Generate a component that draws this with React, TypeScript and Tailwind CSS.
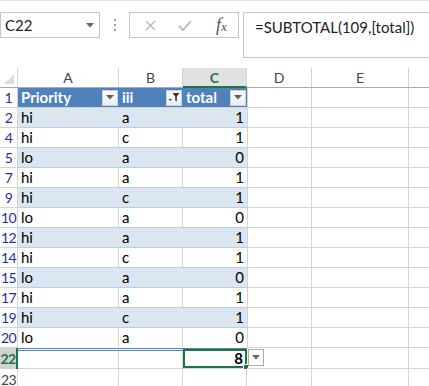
import React from 'react';

type Row = { n: number; a: string; b: string; c: string };

const rows: Row[] = [
  { n: 2, a: 'hi', b: 'a', c: '1' },
  { n: 4, a: 'hi', b: 'c', c: '1' },
  { n: 5, a: 'lo', b: 'a', c: '0' },
  { n: 7, a: 'hi', b: 'a', c: '1' },
  { n: 9, a: 'hi', b: 'c', c: '1' },
  { n: 10, a: 'lo', b: 'a', c: '0' },
  { n: 12, a: 'hi', b: 'a', c: '1' },
  { n: 14, a: 'hi', b: 'c', c: '1' },
  { n: 15, a: 'lo', b: 'a', c: '0' },
  { n: 17, a: 'hi', b: 'a', c: '1' },
  { n: 19, a: 'hi', b: 'c', c: '1' },
  { n: 20, a: 'lo', b: 'a', c: '0' },
];

const Caret = ({ color = '#5f5f5f' }: { color?: string }) => (
  <svg width="8" height="5" viewBox="0 0 8 5">
    <path d="M0 0 H8 L4 4.5 Z" fill={color} />
  </svg>
);

const FilterBtn = ({ funnel }: { funnel?: boolean }) => (
  <div className="flex h-[16px] w-[16px] items-center justify-center border border-[#c9d3e0] bg-gradient-to-b from-white to-[#e9edf2]">
    {funnel ? (
      <svg width="12" height="11" viewBox="0 0 12 11">
        <path d="M0.5 7 H4 L2.25 9 Z" fill="#444" />
        <path d="M4.5 1 H11.5 L8.8 4.5 V9.5 L7.2 8.5 V4.5 Z" fill="#333" />
      </svg>
    ) : (
      <Caret />
    )}
  </div>
);

export default function App() {
  const font = { fontFamily: 'Lato, "Open Sans", sans-serif' };
  return (
    <div className="h-[386px] w-[429px] overflow-hidden bg-white text-[15px] text-black" style={font}>
      {/* formula bar area */}
      <div className="relative h-[68px] border-t border-[#e1e1e1]">
        <div className="flex items-start pt-[11px]">
          <div className="flex h-[26px] w-[100px] items-center justify-between border border-[#c6c6c6] pl-[4px] pr-[5px] text-[15px] text-[#222]">
            <span>C22</span>
            <Caret color="#666" />
          </div>
          <div className="ml-[14px] mt-[7px] flex flex-col gap-[3px]">
            <div className="h-[2px] w-[2px] bg-[#a0a0a0]" />
            <div className="h-[2px] w-[2px] bg-[#a0a0a0]" />
            <div className="h-[2px] w-[2px] bg-[#a0a0a0]" />
          </div>
          <div className="ml-[13px] flex h-[26px] w-[110px] items-center border border-[#c6c6c6]">
            <svg className="ml-[15px]" width="11" height="11" viewBox="0 0 11 11">
              <path d="M1 1 L10 10 M10 1 L1 10" stroke="#b8b8b8" strokeWidth="1.4" />
            </svg>
            <svg className="ml-[22px]" width="14" height="11" viewBox="0 0 14 11">
              <path d="M1 6 L5 10 L13 1" stroke="#b8b8b8" strokeWidth="1.8" fill="none" />
            </svg>
            <span className="ml-[24px] font-['Liberation_Serif'] text-[18px] italic leading-none text-[#555]">
              f<span className="text-[13px]">x</span>
            </span>
          </div>
          <div className="ml-[4px] flex h-[46px] flex-1 items-start border border-r-0 border-[#c6c6c6] pl-[11px] pt-[3px] text-[15px] text-[#222]">
            =SUBTOTAL(109,[total])
          </div>
        </div>
      </div>

      {/* column headers */}
      <div className="flex h-[20px] border-b border-[#ababab] text-[14px] text-[#444]">
        <div className="relative w-[18px] border-r border-[#d4d4d4]">
          <svg className="absolute bottom-[3px] right-[3px]" width="10" height="10" viewBox="0 0 10 10">
            <path d="M10 0 V10 H0 Z" fill="#dcdcdc" />
          </svg>
        </div>
        <div className="flex w-[101px] items-center justify-center border-r border-[#d4d4d4]">A</div>
        <div className="flex w-[64px] items-center justify-center border-r border-[#d4d4d4]">B</div>
        <div className="-mb-px flex w-[64px] items-center justify-center border-b-2 border-r border-[#217346] border-r-[#d4d4d4] bg-[#e1e1e1] font-bold text-[#217346]">
          C
        </div>
        <div className="flex w-[65px] items-center justify-center border-r border-[#d4d4d4]">D</div>
        <div className="flex w-[97px] items-center justify-center border-r border-[#d4d4d4]">E</div>
        <div className="flex-1" />
      </div>

      {/* header row 1 */}
      <div className="flex h-[20px] border-b border-[#d4d4d4]">
        <div className="flex w-[18px] items-center justify-center border-r border-[#d4d4d4] text-[14px] text-[#1f2fa0]">1</div>
        <div className="flex w-[229px] bg-[#4f81bd] font-bold text-white">
          <div className="flex w-[101px] items-center justify-between pl-[3px] pr-[1px]">
            <span>Priority</span>
            <FilterBtn />
          </div>
          <div className="flex w-[64px] items-center justify-between pl-[3px] pr-[1px]">
            <span>iii</span>
            <FilterBtn funnel />
          </div>
          <div className="flex w-[64px] items-center justify-between pl-[3px] pr-[1px]">
            <span>total</span>
            <FilterBtn />
          </div>
        </div>
        <div className="w-[65px] border-l border-r border-[#d4d4d4]" />
        <div className="w-[97px] border-r border-[#d4d4d4]" />
      </div>

      {rows.map((r, i) => {
        const band = i % 2 === 0;
        return (
          <div key={r.n} className="flex h-[20px]">
            <div className="flex w-[18px] items-center justify-center border-b border-r border-[#d4d4d4] text-[14px] tracking-[-0.5px] text-[#1f2fa0]">
              {r.n}
            </div>
            <div
              className={
                'flex w-[229px] border-b ' +
                (i === rows.length - 1 ? 'border-transparent' : 'border-[#b8cce4]') +
                ' ' +
                (band ? 'bg-[#dce6f1]' : 'bg-white')
              }
            >
              <div className={'flex w-[101px] items-center pl-[3px] ' + (band ? '' : 'border-r border-[#d4d4d4]')}>{r.a}</div>
              <div className={'flex w-[64px] items-center pl-[3px] ' + (band ? '' : 'border-r border-[#d4d4d4]')}>{r.b}</div>
              <div className="flex w-[64px] items-center justify-end pr-[3px]">{r.c}</div>
            </div>
            <div className="w-[65px] border-b border-l border-r border-[#d4d4d4]" />
            <div className="w-[97px] border-b border-r border-[#d4d4d4]" />
            <div className="flex-1 border-b border-[#d4d4d4]" />
          </div>
        );
      })}

      {/* total row 22 */}
      <div className="flex h-[21px]">
        <div className="flex w-[18px] items-center justify-center border-r-2 border-[#217346] bg-[#d2d2d2] text-[14px] font-bold tracking-[-0.5px] text-[#217346]">
          22
        </div>
        <div className="flex w-[229px] border-b border-t-[3px] border-double border-b-[#d4d4d4] border-t-[#4f81bd]">
          <div className="w-[101px] border-r border-[#d4d4d4]" />
          <div className="w-[64px] border-r border-[#d4d4d4]" />
          <div className="relative -mt-[2px] flex w-[64px] items-center justify-end border-2 border-[#217346] pr-[2px] font-bold">
            8
            <div className="absolute -bottom-[4px] -right-[4px] h-[6px] w-[6px] border border-white bg-[#217346]" />
          </div>
        </div>
        <div className="relative w-[65px] border-b border-r border-[#d4d4d4]">
          <div className="absolute left-[1px] top-[1px] flex h-[17px] w-[16px] items-center justify-center border border-[#ababab] bg-white">
            <Caret color="#666" />
          </div>
        </div>
        <div className="w-[97px] border-b border-r border-[#d4d4d4]" />
        <div className="flex-1 border-b border-[#d4d4d4]" />
      </div>

      {/* row 23 */}
      <div className="flex h-[20px]">
        <div className="flex w-[18px] items-center justify-center border-r border-[#d4d4d4] text-[14px] tracking-[-0.5px] text-[#444]">23</div>
        <div className="w-[101px] border-r border-[#d4d4d4]" />
        <div className="w-[64px] border-r border-[#d4d4d4]" />
        <div className="w-[64px] border-r border-[#d4d4d4]" />
        <div className="w-[65px] border-r border-[#d4d4d4]" />
        <div className="w-[97px] border-r border-[#d4d4d4]" />
      </div>
    </div>
  );
}
